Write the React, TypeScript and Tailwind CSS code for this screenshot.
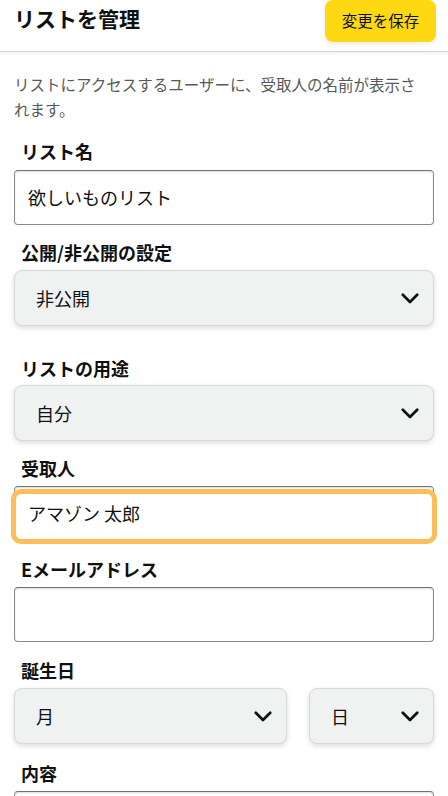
import React from "react";

const font = { fontFamily: '"Noto Sans CJK JP", "Noto Sans", sans-serif' };

function Chevron() {
  return (
    <svg width="18" height="11" viewBox="0 0 18 11" fill="none">
      <path d="M1.8 1.8 L9 9 L16.2 1.8" stroke="#0F1111" strokeWidth="2.7" strokeLinecap="round" strokeLinejoin="round" />
    </svg>
  );
}

function Label({ children }: { children: React.ReactNode }) {
  return <div className="h-[24px] leading-[24px] pl-[7px] text-[18px] font-bold text-[#0F1111]">{children}</div>;
}

function Select({ value, className = "" }: { value: string; className?: string }) {
  return (
    <div
      className={
        "h-[56px] rounded-[8px] bg-[#F0F2F2] border border-[#D5D9D9] shadow-[0_2px_5px_rgba(15,17,17,0.15)] flex items-center justify-between pl-[21px] pr-[14px] text-[18px] text-[#0F1111] " +
        className
      }
    >
      <span>{value}</span>
      <Chevron />
    </div>
  );
}

function Input({ value = "" }: { value?: string }) {
  return (
    <div className="h-[55px] rounded-[4px] border border-[#888C8C] border-t-[#6F7373] bg-white shadow-[inset_0_1px_2px_rgba(15,17,17,0.15)] flex items-center px-[13px] text-[18px] text-[#0F1111] whitespace-pre">
      {value}
    </div>
  );
}

export default function App() {
  return (
    <div className="w-[448px] min-h-[796px] bg-white text-[#0F1111]" style={font}>
      <div className="h-[52px] border-b border-[#D5D9D9] shadow-[0_1px_2px_rgba(213,217,217,0.5)] flex justify-between items-start pl-[14px] pr-[12px]">
        <div className="mt-[4px] h-[28px] leading-[28px] text-[21px] font-bold">リストを管理</div>
        <div className="h-[42px] w-[111px] rounded-[8px] bg-[#FFD814] shadow-[0_2px_5px_rgba(213,217,217,0.5)] flex items-center justify-center text-[15.5px] text-[#0F1111]">
          変更を保存
        </div>
      </div>

      <div className="px-[14px]">
        <p className="pt-[20px] pr-[10px] text-[15.5px] leading-[25px] text-[#565959]">
          リストにアクセスするユーザーに、受取人の名前が表示されます。
        </p>

        <div className="mt-[17px]">
          <Label>リスト名</Label>
          <div className="mt-[7px]">
            <Input value="欲しいものリスト" />
          </div>
        </div>

        <div className="mt-[15px]">
          <Label>公開/非公開の設定</Label>
          <div className="mt-[6px]">
            <Select value="非公開" />
          </div>
        </div>

        <div className="mt-[30px]">
          <Label>リストの用途</Label>
          <div className="mt-[5px]">
            <Select value="自分" />
          </div>
        </div>

        <div className="mt-[15px]">
          <Label>受取人</Label>
          <div className="mt-[6px] relative">
            <Input value="アマゾン 太郎" />
            <div className="absolute left-[-3px] right-[-3px] top-[3px] bottom-[-3px] rounded-[10px] border-[5px] border-[#FFBD59] pointer-events-none" />
          </div>
        </div>

        <div className="mt-[16px]">
          <Label>Eメールアドレス</Label>
          <div className="mt-[6px]">
            <Input />
          </div>
        </div>

        <div className="mt-[16px]">
          <Label>誕生日</Label>
          <div className="mt-[6px] flex gap-[22px]">
            <Select value="月" className="flex-1" />
            <Select value="日" className="w-[125px]" />
          </div>
        </div>

        <div className="mt-[17px]">
          <Label>内容</Label>
          <div className="mt-[6px]">
            <Input />
          </div>
        </div>
      </div>
    </div>
  );
}
